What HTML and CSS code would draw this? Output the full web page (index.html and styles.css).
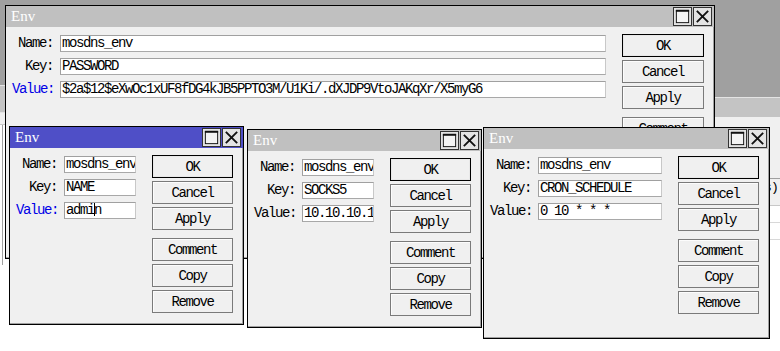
FILE: index.html
```html
<!DOCTYPE html>
<html>
<head>
<meta charset="utf-8">
<title>Env</title>
<link rel="stylesheet" href="styles.css">
</head>
<body>
<div class="desk">
  <div class="bgwin bg-main">
    <div class="bg-title"></div>
    <div class="bg-tool"></div>
    <div class="bg-head"><span class="bg-col">s)</span></div>
    <div class="bg-row"></div>
    <div class="bg-row"></div>
  </div>
  <div class="bgwin bg-left">
    <div class="bg-title"></div>
    <div class="bg-strip"></div>
    <div class="bg-list"></div>
  </div>

  <div class="win w0">
    <div class="titlebar"><span class="title">Env</span>
      <span class="tb-btns">
        <span class="tbb"><svg viewBox="0 0 18 18" width="18" height="18"><rect x="2.5" y="2.5" width="13" height="13" fill="#f4f4f4" stroke="#111"/><line x1="2" y1="3" x2="16" y2="3" stroke="#111" stroke-width="2"/></svg></span>
        <span class="tbb"><svg viewBox="0 0 18 18" width="18" height="18"><path d="M3 3 L15 15 M15 3 L3 15" stroke="#111" stroke-width="2" fill="none"/></svg></span>
      </span>
    </div>
    <div class="body">
      <div class="form">
        <span class="lbl">Name:</span><div class="inp">mosdns_env</div>
        <span class="lbl">Key:</span><div class="inp">PASSWORD</div>
        <span class="lbl blue">Value:</span><div class="inp">$2a$12$eXwOc1xUF8fDG4kJB5PPTO3M/U1Ki/.dXJDP9VtoJAKqXr/X5myG6</div>
      </div>
      <div class="btns">
        <div class="btn def">OK</div>
        <div class="btn">Cancel</div>
        <div class="btn">Apply</div>
        <div class="btn sep">Comment</div>
        <div class="btn">Copy</div>
        <div class="btn">Remove</div>
      </div>
    </div>
  </div>

  <div class="win w1 active">
    <div class="titlebar"><span class="title">Env</span>
      <span class="tb-btns">
        <span class="tbb"><svg viewBox="0 0 18 18" width="18" height="18"><rect x="2.5" y="2.5" width="13" height="13" fill="#f4f4f4" stroke="#111"/><line x1="2" y1="3" x2="16" y2="3" stroke="#111" stroke-width="2"/></svg></span>
        <span class="tbb"><svg viewBox="0 0 18 18" width="18" height="18"><path d="M3 3 L15 15 M15 3 L3 15" stroke="#111" stroke-width="2" fill="none"/></svg></span>
      </span>
    </div>
    <div class="body">
      <div class="form">
        <span class="lbl">Name:</span><div class="inp">mosdns_env</div>
        <span class="lbl">Key:</span><div class="inp">NAME</div>
        <span class="lbl blue">Value:</span><div class="inp">admi<span class="caret"></span>n</div>
      </div>
      <div class="btns">
        <div class="btn def">OK</div>
        <div class="btn">Cancel</div>
        <div class="btn">Apply</div>
        <div class="btn sep">Comment</div>
        <div class="btn">Copy</div>
        <div class="btn">Remove</div>
      </div>
    </div>
  </div>

  <div class="win w2">
    <div class="titlebar"><span class="title">Env</span>
      <span class="tb-btns">
        <span class="tbb"><svg viewBox="0 0 18 18" width="18" height="18"><rect x="2.5" y="2.5" width="13" height="13" fill="#f4f4f4" stroke="#111"/><line x1="2" y1="3" x2="16" y2="3" stroke="#111" stroke-width="2"/></svg></span>
        <span class="tbb"><svg viewBox="0 0 18 18" width="18" height="18"><path d="M3 3 L15 15 M15 3 L3 15" stroke="#111" stroke-width="2" fill="none"/></svg></span>
      </span>
    </div>
    <div class="body">
      <div class="form">
        <span class="lbl">Name:</span><div class="inp">mosdns_env</div>
        <span class="lbl">Key:</span><div class="inp">SOCKS5</div>
        <span class="lbl">Value:</span><div class="inp">10.10.10.1</div>
      </div>
      <div class="btns">
        <div class="btn def">OK</div>
        <div class="btn">Cancel</div>
        <div class="btn">Apply</div>
        <div class="btn sep">Comment</div>
        <div class="btn">Copy</div>
        <div class="btn">Remove</div>
      </div>
    </div>
  </div>

  <div class="win w3">
    <div class="titlebar"><span class="title">Env</span>
      <span class="tb-btns">
        <span class="tbb"><svg viewBox="0 0 18 18" width="18" height="18"><rect x="2.5" y="2.5" width="13" height="13" fill="#f4f4f4" stroke="#111"/><line x1="2" y1="3" x2="16" y2="3" stroke="#111" stroke-width="2"/></svg></span>
        <span class="tbb"><svg viewBox="0 0 18 18" width="18" height="18"><path d="M3 3 L15 15 M15 3 L3 15" stroke="#111" stroke-width="2" fill="none"/></svg></span>
      </span>
    </div>
    <div class="body">
      <div class="form">
        <span class="lbl">Name:</span><div class="inp">mosdns_env</div>
        <span class="lbl">Key:</span><div class="inp">CRON_SCHEDULE</div>
        <span class="lbl">Value:</span><div class="inp">0 10 * * *</div>
      </div>
      <div class="btns">
        <div class="btn def">OK</div>
        <div class="btn">Cancel</div>
        <div class="btn">Apply</div>
        <div class="btn sep">Comment</div>
        <div class="btn">Copy</div>
        <div class="btn">Remove</div>
      </div>
    </div>
  </div>
</div>
</body>
</html>
```

FILE: styles.css
```css
* { box-sizing: border-box; }
html, body { margin: 0; padding: 0; }
body {
  width: 780px;
  height: 351px;
  overflow: hidden;
  background: #ffffff;
  font-family: "Liberation Mono", "DejaVu Sans Mono", monospace;
  font-size: 14px;
  letter-spacing: -1.4px;
  color: #000;
}
.desk {
  position: relative;
  width: 780px;
  height: 351px;
  overflow: hidden;
  background: #a0a0a0;
}

/* background windows peeking through */
.bgwin {
  position: absolute;
  display: flex;
  flex-direction: column;
  background: #ffffff;
}
.bg-main { left: -2px; top: 97px; width: 784px; height: 260px; }
.bg-left { left: -40px; top: 85px; width: 46px; height: 180px; }
.bg-title {
  height: 20px;
  flex: none;
  background: #c4c4c4;
  border-top: 1px solid #e4e4e4;
}
.bg-left .bg-title { height: 28px; border-bottom: 1px solid #e4e4e4; }
.bg-tool { height: 61px; flex: none; background: #f0f0f0; }
.bg-head {
  height: 28px;
  flex: none;
  background: #f0f0f0;
  border-top: 1px solid #a0a0a0;
  border-bottom: 1px solid #c8c8c8;
  display: flex;
  align-items: flex-start;
  padding: 1px 0 0 766px;
}
.bg-col { font-size: 13px; letter-spacing: -0.8px; line-height: 15px; }
.bg-row { height: 17px; flex: none; border-bottom: 1px solid #d8d8d8; background: #fff; }
.bg-strip { height: 12px; flex: none; background: #f0f0f0; border-bottom: 1px solid #c8c8c8; }
.bg-list { flex: 1; background: #fff; border-right: 1px solid #a0a0a0; margin-right: 3px; }

/* windows */
.win {
  position: absolute;
  display: flex;
  flex-direction: column;
  background: #f0f0f0;
  border: 1px solid #000;
  box-shadow: inset -1px -1px 0 #a0a0a0;
}
.w0 { left: 5px; top: 5px; width: 710px; height: 254px; }
.w1 { left: 9px; top: 126px; width: 235px; height: 199px; }
.w2 { left: 247px; top: 129px; width: 235px; height: 199px; }
.w3 { left: 483px; top: 127px; width: 287px; height: 212px; }

.titlebar {
  height: 21px;
  flex: none;
  background: #c0c0c0;
  display: flex;
  align-items: center;
  justify-content: space-between;
  padding: 0 2px 0 5px;
}
.active .titlebar { background: #4f4fc7; }
.title {
  color: #fff;
  font-family: "Liberation Serif", "DejaVu Serif", serif;
  font-size: 15px;
  letter-spacing: 0;
}
.tb-btns { display: flex; gap: 1px; }
.tbb {
  width: 19px;
  height: 19px;
  border: 1px solid #333;
  background: #e4e4e4;
  display: flex;
  align-items: center;
  justify-content: center;
}
.tbb svg { display: block; width: 17px; height: 17px; }

.body {
  display: flex;
  padding: 7px 9px 0 6px;
}
.form {
  display: grid;
  grid-template-columns: 41px auto;
  column-gap: 7px;
  row-gap: 6px;
  align-content: start;
  margin-top: 1px;
}
.lbl {
  text-align: right;
  white-space: nowrap;
  line-height: 17px;
  height: 17px;
}
.lbl.blue { color: #0000e6; }
.inp {
  height: 17px;
  line-height: 15px;
  background: #fff;
  border: 1px solid #a0a0a0;
  border-right-color: #c8c8c8;
  border-bottom-color: #a8a8a8;
  padding-left: 1px;
  white-space: nowrap;
  overflow: hidden;
}
.w0 .inp { width: 546px; }
.w1 .inp, .w2 .inp { width: 72px; }
.w3 .inp { width: 124px; }
.caret {
  display: inline-block;
  width: 1px;
  height: 13px;
  background: #000;
  vertical-align: -2px;
  margin: 0 -1px 0 0;
}

.btns {
  display: flex;
  flex-direction: column;
  gap: 3px;
  margin-left: 16px;
}
.btn {
  width: 81px;
  height: 23px;
  border: 1px solid #7a7a7a;
  box-shadow: inset 1px 1px 0 #fcfcfc;
  background: #f0f0f0;
  display: flex;
  align-items: center;
  justify-content: center;
  white-space: nowrap;
}
.w0 .btn { width: 82px; }
.btn.def { border-color: #000; box-shadow: inset 0 0 0 1px #e8e8e8; }
.btn.sep { margin-top: 5px; }
```
